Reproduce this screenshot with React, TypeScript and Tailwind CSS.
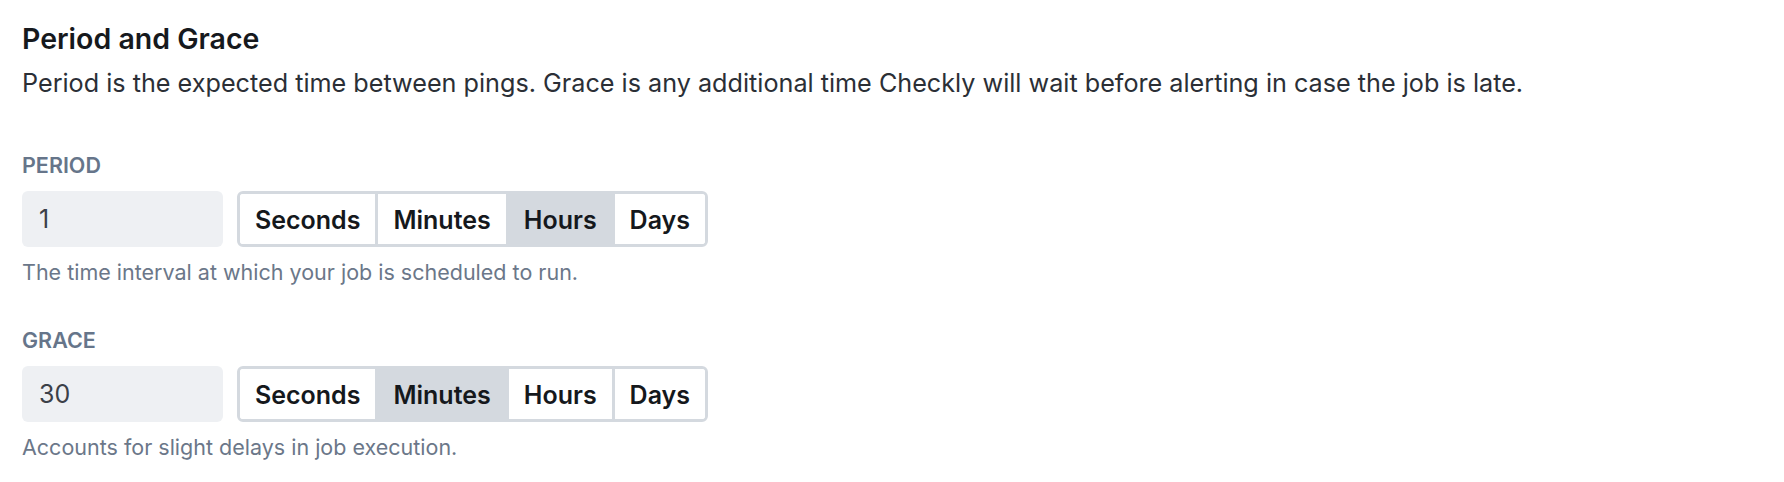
const UNITS = ["Seconds", "Minutes", "Hours", "Days"];

interface DurationFieldProps {
  label: string;
  value: string;
  unit: string;
  help: string;
}

function DurationField({ label, value, unit, help }: DurationFieldProps) {
  return (
    <div>
      <div className="text-[21.5px] leading-[28px] font-semibold uppercase text-[#66758a]">
        {label}
      </div>
      <div className="mt-[12px] flex items-stretch gap-[14px]">
        <div className="w-[201px] h-[56px] rounded-md bg-[#eef0f3] flex items-center px-[17px] pt-[2px] text-[25px] text-[#3b4048]">
          {value}
        </div>
        <div className="flex h-[56px] rounded-md border-[3px] border-[#d4d9df] overflow-hidden">
          {UNITS.map((u, i) => {
            const active = u === unit;
            const last = i === UNITS.length - 1;
            return (
              <button
                key={u}
                className={`px-[15px] pt-[4px] text-[25px] font-semibold text-[#15181c] ${
                  active ? "bg-[#d4d9df]" : "bg-white"
                } ${last ? "" : "border-r-[3px] border-[#d4d9df]"}`}
              >
                {u}
              </button>
            );
          })}
        </div>
      </div>
      <p className="mt-[11px] text-[21.5px] leading-[28px] text-[#6b7789]">{help}</p>
    </div>
  );
}

export default function App() {
  return (
    <div
      className="min-h-[482px] bg-white px-[22px] pt-[21px]"
      style={{ fontFamily: "Inter, 'Noto Sans', sans-serif" }}
    >
      <h2 className="text-[28.5px] leading-[36px] font-semibold text-[#16191d]">
        Period and Grace
      </h2>
      <p className="mt-[10px] text-[25.2px] leading-[32px] text-[#2b2f36]">
        Period is the expected time between pings. Grace is any additional time
        Checkly will wait before alerting in case the job is late.
      </p>
      <div className="mt-[52px] flex flex-col gap-10">
        <DurationField
          label="Period"
          value="1"
          unit="Hours"
          help="The time interval at which your job is scheduled to run."
        />
        <DurationField
          label="Grace"
          value="30"
          unit="Minutes"
          help="Accounts for slight delays in job execution."
        />
      </div>
    </div>
  );
}
